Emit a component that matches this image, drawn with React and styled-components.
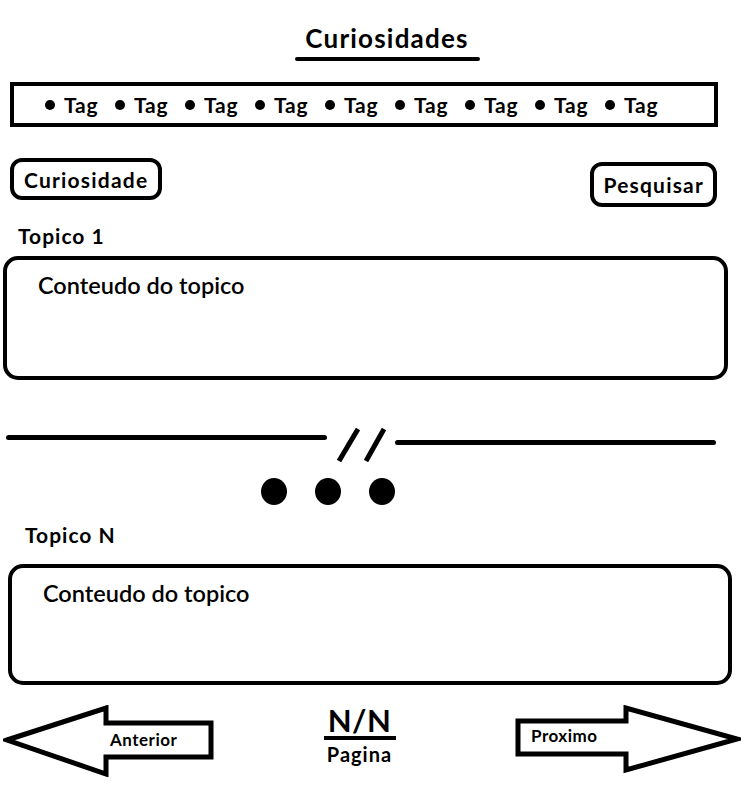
import React from 'react';
import styled, { createGlobalStyle } from 'styled-components';

const GlobalStyle = createGlobalStyle`
  html, body {
    margin: 0;
    padding: 0;
    background: #fff;
  }
  body {
    font-family: Lato, "Noto Sans", sans-serif;
    color: #000;
  }
`;

const Page = styled.div`
  width: 744px;
  height: 800px;
  display: flex;
  flex-direction: column;
  overflow: hidden;
`;

const Header = styled.header`
  padding: 23px 0 0 30px;
  display: flex;
  flex-direction: column;
  align-items: center;
`;

const Title = styled.h1`
  margin: 0;
  font-size: 26px;
  line-height: 31px;
  font-weight: 700;
  letter-spacing: 1.2px;
`;

const TitleRule = styled.div`
  width: 185px;
  height: 4px;
  margin-top: 3px;
  background: #000;
  border-radius: 2px;
`;

const TagBar = styled.ul`
  list-style: none;
  margin: 21px 26px 0 10px;
  padding: 0 0 0 31px;
  height: 45px;
  box-sizing: border-box;
  border: 4px solid #000;
  display: flex;
  align-items: center;
`;

const Tag = styled.li`
  width: 70px;
  display: flex;
  align-items: center;
  gap: 9px;
  font-size: 21px;
  font-weight: 700;
  line-height: 24px;
  letter-spacing: 0.8px;

  &::before {
    content: '';
    width: 10px;
    height: 10px;
    border-radius: 50%;
    background: #000;
  }
`;

const ButtonRow = styled.div`
  margin-top: 31px;
  padding: 0 27px 0 10px;
  display: flex;
  justify-content: space-between;
  align-items: flex-start;
`;

const OutlineButton = styled.button`
  margin-top: ${p => p.$offset || 0}px;
  height: ${p => p.$h}px;
  padding: 0 ${p => p.$pad}px;
  border: 4px solid #000;
  border-radius: 12px;
  background: #fff;
  font-family: inherit;
  font-size: 21px;
  font-weight: 700;
  letter-spacing: 1.2px;
  color: #000;
`;

const Topic = styled.section`
  margin-top: ${p => p.$top}px;
  padding: 0 ${p => p.$right}px 0 ${p => p.$left}px;
  display: flex;
  flex-direction: column;
`;

const TopicLabel = styled.h2`
  margin: 0 0 0 ${p => p.$indent}px;
  font-size: 21px;
  line-height: 24px;
  font-weight: 700;
  letter-spacing: 1px;
`;

const TopicBox = styled.div`
  margin-top: ${p => p.$gap}px;
  height: ${p => p.$h}px;
  box-sizing: border-box;
  border: 4px solid #000;
  border-radius: 15px;
  padding: 12px 31px;
  font-size: 23.5px;
  line-height: 27px;
  font-weight: 600;
`;

const Divider = styled.div`
  margin-top: 48px;
  height: 34px;
  padding: 0 28px 0 6px;
  display: flex;
  align-items: flex-start;
`;

const DividerLine = styled.div`
  flex: 1;
  height: 5px;
  margin-top: ${p => p.$drop}px;
  background: #000;
  border-radius: 3px;
`;

const Dots = styled.div`
  margin-top: 16px;
  padding-left: 261px;
  display: flex;
  gap: 28px;
`;

const Dot = styled.span`
  width: 26px;
  height: 27px;
  border-radius: 50%;
  background: #000;
`;

const Pager = styled.nav`
  margin-top: 20px;
  padding-left: 3px;
  display: flex;
  align-items: flex-start;
`;

const ArrowButton = styled.button`
  position: relative;
  width: ${p => p.$w}px;
  height: 72px;
  margin-left: ${p => p.$ml || 0}px;
  padding: 0;
  border: none;
  background: none;
  font-family: inherit;
  color: #000;

  svg {
    position: absolute;
    left: 0;
    top: 0;
  }
`;

const ArrowLabel = styled.span`
  position: absolute;
  left: ${p => p.$x}px;
  top: ${p => p.$y}px;
  font-size: 17px;
  line-height: 20px;
  font-weight: 700;
  letter-spacing: 0.5px;
`;

const PageCount = styled.div`
  margin-left: 107px;
  width: 75px;
  display: flex;
  flex-direction: column;
  align-items: center;
`;

const PageNumber = styled.div`
  font-size: 31px;
  line-height: 31px;
  font-weight: 700;
  letter-spacing: 0.5px;
`;

const PageRule = styled.div`
  width: 72px;
  height: 4px;
  background: #000;
`;

const PageWord = styled.div`
  margin-top: 2px;
  font-size: 20px;
  line-height: 24px;
  font-weight: 700;
  letter-spacing: 1px;
`;

const tags = Array.from({ length: 9 }, () => 'Tag');

export default function App() {
  return (
    <Page>
      <GlobalStyle />
      <Header>
        <Title>Curiosidades</Title>
        <TitleRule />
      </Header>

      <TagBar>
        {tags.map((t, i) => (
          <Tag key={i}>{t}</Tag>
        ))}
      </TagBar>

      <ButtonRow>
        <OutlineButton $h={42} $pad={10}>Curiosidade</OutlineButton>
        <OutlineButton $h={45} $pad={9} $offset={4}>Pesquisar</OutlineButton>
      </ButtonRow>

      <Topic $top={17} $left={3} $right={16}>
        <TopicLabel $indent={15}>Topico 1</TopicLabel>
        <TopicBox $gap={8} $h={124}>Conteudo do topico</TopicBox>
      </Topic>

      <Divider>
        <DividerLine $drop={7} />
        <svg width="68" height="34" viewBox="0 0 68 34">
          <line x1="31" y1="1" x2="12" y2="33" stroke="#000" strokeWidth="5" />
          <line x1="57" y1="1" x2="39" y2="33" stroke="#000" strokeWidth="5" />
        </svg>
        <DividerLine $drop={12} />
      </Divider>

      <Dots>
        <Dot />
        <Dot />
        <Dot />
      </Dots>

      <Topic $top={18} $left={8} $right={12}>
        <TopicLabel $indent={17}>Topico N</TopicLabel>
        <TopicBox $gap={17} $h={121}>Conteudo do topico</TopicBox>
      </Topic>

      <Pager>
        <ArrowButton $w={212}>
          <svg width="212" height="72" viewBox="0 0 212 72">
            <polygon
              points="4,35 103,3 103,18 208,18 208,52 103,52 103,69"
              fill="#fff"
              stroke="#000"
              strokeWidth="5"
            />
          </svg>
          <ArrowLabel $x={107} $y={25}>Anterior</ArrowLabel>
        </ArrowButton>

        <PageCount>
          <PageNumber>N/N</PageNumber>
          <PageRule />
          <PageWord>Pagina</PageWord>
        </PageCount>

        <ArrowButton $w={226} $ml={118}>
          <svg width="226" height="72" viewBox="0 0 226 72">
            <polygon
              points="3,16 111,16 111,3 222,34 111,65 111,49 3,49"
              fill="#fff"
              stroke="#000"
              strokeWidth="5"
            />
          </svg>
          <ArrowLabel $x={16} $y={21}>Proximo</ArrowLabel>
        </ArrowButton>
      </Pager>
    </Page>
  );
}
